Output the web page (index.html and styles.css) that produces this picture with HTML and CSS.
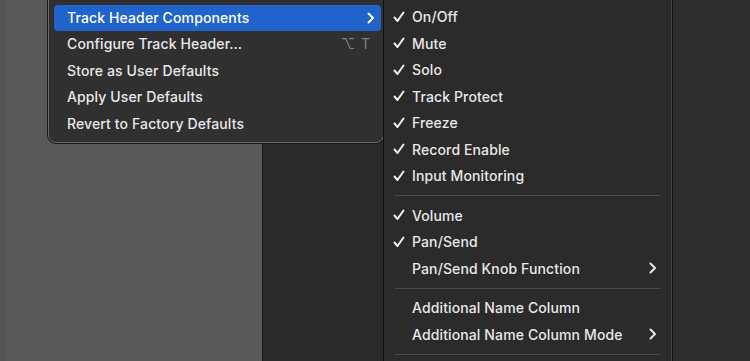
FILE: index.html
```html
<!DOCTYPE html>
<html>
<head>
<meta charset="utf-8">
<link rel="stylesheet" href="styles.css">
</head>
<body>
<div class="stage">
  <div class="pane-left"></div>
  <div class="pane-mid"></div>
  <div class="pane-right"></div>

  <div class="menu main-menu">
    <div class="item active"><span class="label">Track Header Components</span><span class="chev"><svg width="8" height="12" viewBox="0 0 8 12"><path d="M1.5 1.5 L6 6 L1.5 10.5" fill="none" stroke="currentColor" stroke-width="2" stroke-linecap="round" stroke-linejoin="round"/></svg></span></div>
    <div class="item"><span class="label">Configure Track Header…</span><span class="shortcut">⌥ T</span></div>
    <div class="item"><span class="label">Store as User Defaults</span></div>
    <div class="item"><span class="label">Apply User Defaults</span></div>
    <div class="item"><span class="label">Revert to Factory Defaults</span></div>
  </div>

  <div class="menu sub-menu">
    <div class="item"><span class="check"><svg width="12" height="12" viewBox="0 0 12 12"><path d="M1.5 6.5 L4.5 10 L10.5 1.5" fill="none" stroke="currentColor" stroke-width="2" stroke-linecap="round" stroke-linejoin="round"/></svg></span><span class="label">On/Off</span></div>
    <div class="item"><span class="check"><svg width="12" height="12" viewBox="0 0 12 12"><path d="M1.5 6.5 L4.5 10 L10.5 1.5" fill="none" stroke="currentColor" stroke-width="2" stroke-linecap="round" stroke-linejoin="round"/></svg></span><span class="label">Mute</span></div>
    <div class="item"><span class="check"><svg width="12" height="12" viewBox="0 0 12 12"><path d="M1.5 6.5 L4.5 10 L10.5 1.5" fill="none" stroke="currentColor" stroke-width="2" stroke-linecap="round" stroke-linejoin="round"/></svg></span><span class="label">Solo</span></div>
    <div class="item"><span class="check"><svg width="12" height="12" viewBox="0 0 12 12"><path d="M1.5 6.5 L4.5 10 L10.5 1.5" fill="none" stroke="currentColor" stroke-width="2" stroke-linecap="round" stroke-linejoin="round"/></svg></span><span class="label">Track Protect</span></div>
    <div class="item"><span class="check"><svg width="12" height="12" viewBox="0 0 12 12"><path d="M1.5 6.5 L4.5 10 L10.5 1.5" fill="none" stroke="currentColor" stroke-width="2" stroke-linecap="round" stroke-linejoin="round"/></svg></span><span class="label">Freeze</span></div>
    <div class="item"><span class="check"><svg width="12" height="12" viewBox="0 0 12 12"><path d="M1.5 6.5 L4.5 10 L10.5 1.5" fill="none" stroke="currentColor" stroke-width="2" stroke-linecap="round" stroke-linejoin="round"/></svg></span><span class="label">Record Enable</span></div>
    <div class="item"><span class="check"><svg width="12" height="12" viewBox="0 0 12 12"><path d="M1.5 6.5 L4.5 10 L10.5 1.5" fill="none" stroke="currentColor" stroke-width="2" stroke-linecap="round" stroke-linejoin="round"/></svg></span><span class="label">Input Monitoring</span></div>
    <div class="sep"></div>
    <div class="item"><span class="check"><svg width="12" height="12" viewBox="0 0 12 12"><path d="M1.5 6.5 L4.5 10 L10.5 1.5" fill="none" stroke="currentColor" stroke-width="2" stroke-linecap="round" stroke-linejoin="round"/></svg></span><span class="label">Volume</span></div>
    <div class="item"><span class="check"><svg width="12" height="12" viewBox="0 0 12 12"><path d="M1.5 6.5 L4.5 10 L10.5 1.5" fill="none" stroke="currentColor" stroke-width="2" stroke-linecap="round" stroke-linejoin="round"/></svg></span><span class="label">Pan/Send</span></div>
    <div class="item"><span class="check"></span><span class="label">Pan/Send Knob Function</span><span class="chev"><svg width="8" height="12" viewBox="0 0 8 12"><path d="M1.5 1.5 L6 6 L1.5 10.5" fill="none" stroke="currentColor" stroke-width="2" stroke-linecap="round" stroke-linejoin="round"/></svg></span></div>
    <div class="sep"></div>
    <div class="item"><span class="check"></span><span class="label">Additional Name Column</span></div>
    <div class="item"><span class="check"></span><span class="label">Additional Name Column Mode</span><span class="chev"><svg width="8" height="12" viewBox="0 0 8 12"><path d="M1.5 1.5 L6 6 L1.5 10.5" fill="none" stroke="currentColor" stroke-width="2" stroke-linecap="round" stroke-linejoin="round"/></svg></span></div>
    <div class="sep"></div>
  </div>
</div>
</body>
</html>
```

FILE: styles.css
```css
html, body {
  margin: 0;
  padding: 0;
  width: 750px;
  height: 361px;
  overflow: hidden;
  background: #2e2e2e;
  font-family: "Inter", "Liberation Sans", Arial, sans-serif;
}

.stage {
  position: relative;
  display: flex;
  width: 750px;
  height: 361px;
  overflow: hidden;
}

.pane-left {
  width: 262px;
  background: #595959;
  border-left: 7px solid #555555;
  box-sizing: border-box;
}

.pane-mid {
  width: 409px;
  background: #2a2a2a;
  border-left: 1px solid #1c1c1c;
  box-sizing: border-box;
}

.pane-right {
  flex: 1;
  background: #2e2e2e;
  border-left: 2px solid #111111;
}

.menu {
  position: absolute;
  background: #2c2c2d;
  color: #e8e8e8;
  font-size: 14px;
  font-weight: 500;
  letter-spacing: 0.12px;
  box-sizing: border-box;
}

.main-menu {
  left: 48px;
  top: -10px;
  width: 336px;
  height: 153px;
  padding: 13.5px 2px 0 5px;
  background: #303031;
  border: 1px solid #6a6a6a;
  border-radius: 8px;
  box-shadow: 0 0 0 1px #1a1a1a;
}

.main-menu .item {
  display: flex;
  align-items: center;
  height: 26.5px;
  padding: 0 6px 0 13px;
  border-radius: 4px;
}

.main-menu .item:first-child {
  height: 26px;
}

.main-menu .item.active {
  background: #1f63cb;
  color: #ffffff;
}

.label {
  flex: 1;
  white-space: nowrap;
}

.shortcut {
  color: #808080;
  font-weight: 400;
  letter-spacing: 0;
  word-spacing: 2px;
  margin-right: 5px;
}

.chev {
  display: flex;
  align-items: center;
  width: 8px;
  height: 12px;
}

.sub-menu {
  left: 383px;
  top: -10px;
  width: 289px;
  height: 400px;
  padding: 13.5px 0 0 9px;
  background: #2b2b2c;
  border-left: 1px solid #101010;
  border-right: 1px solid #444444;
}

.sub-menu .item {
  display: flex;
  align-items: center;
  height: 26.5px;
  padding-right: 14px;
}

.check {
  display: flex;
  align-items: center;
  width: 19px;
  color: #f0f0f0;
}

.sep {
  height: 1px;
  background: #4a4a4a;
  margin: 6px 11px 6px 2px;
}
```
